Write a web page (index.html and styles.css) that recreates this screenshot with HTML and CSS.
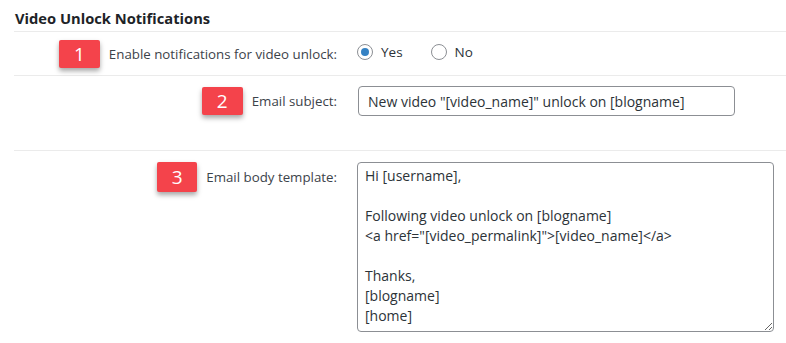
FILE: index.html
```html
<!DOCTYPE html>
<html>
<head>
    <meta charset="UTF-8">
    <title>Video Unlock Notifications</title>
    <link rel="stylesheet" href="styles.css">
</head>
<body>
    <div class="wrap">
        <h2 class="sectionTitle">Video Unlock Notifications</h2>
        <div class="row row1">
            <div class="rowLabel">
                <span class="badge">1</span>
                <span class="labelText">Enable notifications for video unlock:</span>
            </div>
            <div class="rowField radios">
                <label class="radio"><span class="radioBox checked"></span>Yes</label>
                <label class="radio"><span class="radioBox"></span>No</label>
            </div>
        </div>
        <div class="row row2">
            <div class="rowLabel">
                <span class="badge">2</span>
                <span class="labelText">Email subject:</span>
            </div>
            <div class="rowField">
                <input class="textInput" type="text" value='New video "[video_name]" unlock on [blogname]'>
            </div>
        </div>
        <div class="row row3">
            <div class="rowLabel">
                <span class="badge">3</span>
                <span class="labelText">Email body template:</span>
            </div>
            <div class="rowField">
<textarea class="textBody">Hi [username],

Following video unlock on [blogname]
&lt;a href="[video_permalink]"&gt;[video_name]&lt;/a&gt;

Thanks,
[blogname]
[home]</textarea>
            </div>
        </div>
    </div>
</body>
</html>
```

FILE: styles.css
```css
*{padding:0;margin:0;box-sizing:border-box}
body{background:#fff;font-family:"Open Sans","Noto Sans",sans-serif;color:#3c434a}
.wrap{padding-left:14px}
.sectionTitle{font-size:14.7px;font-weight:700;color:#1d2327;line-height:20px;padding:8px 0 3px 1px;border-bottom:1px solid #ebebeb}
.row{display:flex;border-bottom:1px solid #ebebeb}
.row1{padding:8px 0 7px}
.row2{padding:10px 0 34px}
.row3{padding:11px 0 20px;border-bottom:0}
.rowLabel{width:323px;display:flex;justify-content:flex-end;align-items:center;height:30px;gap:9px;font-size:13.3px}
.row1 .rowLabel{height:28px}
.badge{display:inline-block;width:41px;height:28px;line-height:28px;text-align:center;background:#f4434b;color:#fff;font-size:19px;border-radius:2px;box-shadow:0 3px 5px rgba(0,0,0,.35)}
.row3 .badge{width:40px;height:30px;line-height:30px}
.labelText{color:#3c434a}
.rowField{padding-left:20px}
.radios{display:flex;align-items:center;height:28px;font-size:13.5px;padding-bottom:4px}
.radio{display:flex;align-items:center;gap:8px;margin-right:28px;color:#2c3338}
.radioBox{width:16px;height:16px;border:1px solid #8c8f94;border-radius:50%;display:flex;align-items:center;justify-content:center}
.radioBox.checked::before{content:"";width:8px;height:8px;border-radius:50%;background:#3582c4}
.textInput{margin-left:1px;width:377px;height:30px;border:1px solid #8c8f94;border-radius:4px;padding:0 9px;font:14px "Open Sans","Noto Sans",sans-serif;color:#2c3338}
.textBody{display:block;width:417px;height:170px;border:1px solid #8c8f94;border-radius:4px;padding:3px 7px;font:14px/20px "Open Sans","Noto Sans",sans-serif;color:#2c3338;resize:vertical}
```
